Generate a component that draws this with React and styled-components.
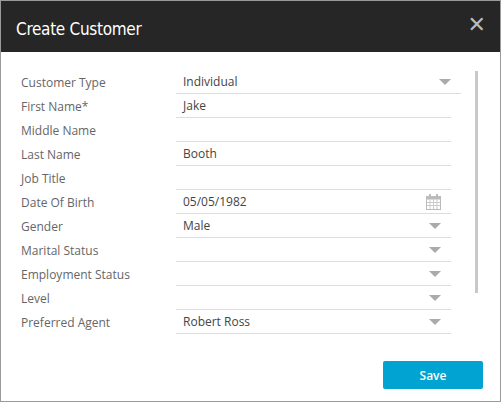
import React from "react";
import styled, { createGlobalStyle } from "styled-components";

const G = createGlobalStyle`
  body { margin: 0; font-family: "Open Sans", sans-serif; background: #fff; }
`;
const Dialog = styled.div`
  width: 501px; height: 402px; box-sizing: border-box;
  border: 1px solid #9a9a9a; display: flex; flex-direction: column; background: #fff;
`;
const Header = styled.div`
  height: 51px; background: #262626; display: flex; align-items: center;
  justify-content: space-between; padding: 0 14px 0 15px; flex-shrink: 0;
`;
const Title = styled.div`
  color: #fff; font-family: "DejaVu Sans Condensed", "Open Sans", sans-serif;
  font-stretch: condensed; font-size: 17px; letter-spacing: -0.3px; margin-top: 4px;
`;
const Close = styled.div`
  color: #bbb; font-size: 22px; font-weight: 700; margin-top: -4px; font-family: "DejaVu Sans", sans-serif;
`;
const Body = styled.div`
  display: flex; padding: 18px 22px 0 20px; gap: 14px;
`;
const Form = styled.div`
  flex: 1; display: flex; flex-direction: column;
`;
const Row = styled.div`
  display: flex; height: 24px; align-items: flex-end;
`;
const Label = styled.div`
  width: 155px; font-size: 12px; color: #666; height: 23px; line-height: 23px;
`;
const Field = styled.div`
  width: ${p => p.w}px; height: 23px; border-bottom: 1px solid #ddd; display: flex;
  align-items: center; justify-content: space-between; padding: 0 10px 0 7px; box-sizing: content-box;
  font-size: 12px; color: #444;
`;
const Caret = styled.span`
  width: 0; height: 0; border-left: 6px solid transparent; border-right: 6px solid transparent;
  border-top: 6px solid #aaa;
`;
const Scroll = styled.div`
  width: 4px; height: 222px; background: #c8c8c8; margin-top: 1px;
`;
const Footer = styled.div`
  display: flex; justify-content: flex-end; padding: 27px 17px 0 0;
`;
const Save = styled.button`
  width: 100px; height: 28px; border: none; border-radius: 2px; background: #00a3d2;
  color: #fff; font-family: "Open Sans", sans-serif; font-size: 12px; font-weight: 600;
`;
const Cal = () => (
  <svg width="15" height="16" viewBox="0 0 15 16">
    <rect x="0.5" y="2.5" width="14" height="13" fill="none" stroke="#bbb" />
    <rect x="0.5" y="2.5" width="14" height="3" fill="#bbb" />
    <rect x="3" y="0" width="2" height="4" fill="#bbb" />
    <rect x="10" y="0" width="2" height="4" fill="#bbb" />
    {[4, 7.5, 11].map(x => <line key={x} x1={x} y1="5" x2={x} y2="15" stroke="#ccc" />)}
    {[8.5, 11.5].map(y => <line key={y} x1="1" y1={y} x2="14" y2={y} stroke="#ccc" />)}
  </svg>
);
const rows = [
  ["Customer Type", "Individual", "caret", 268],
  ["First Name*", "Jake", null, 258],
  ["Middle Name", "", null, 258],
  ["Last Name", "Booth", null, 258],
  ["Job Title", "", null, 258],
  ["Date Of Birth", "05/05/1982", "cal", 258],
  ["Gender", "Male", "caret", 258],
  ["Marital Status", "", "caret", 258],
  ["Employment Status", "", "caret", 258],
  ["Level", "", "caret", 258],
  ["Preferred Agent", "Robert Ross", "caret", 258],
];
export default function App() {
  return (
    <Dialog>
      <G />
      <Header><Title>Create Customer</Title><Close>✕</Close></Header>
      <Body>
        <Form>
          {rows.map(([l, v, t, w]) => (
            <Row key={l}>
              <Label>{l}</Label>
              <Field w={w}><span>{v}</span>{t === "caret" && <Caret />}{t === "cal" && <Cal />}</Field>
            </Row>
          ))}
        </Form>
        <Scroll />
      </Body>
      <Footer><Save>Save</Save></Footer>
    </Dialog>
  );
}
